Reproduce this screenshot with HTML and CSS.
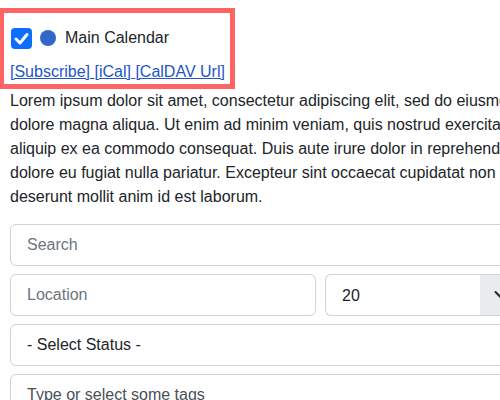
FILE: index.html
```html
<!DOCTYPE html>
<html>
<head>
<meta charset="utf-8">
<link rel="stylesheet" href="styles.css">
</head>
<body>
<div class="page">
  <div class="cal-box">
    <div class="cal-row">
      <span class="check"><svg width="21" height="21" viewBox="0 0 21 21"><rect width="21" height="21" rx="4" fill="#0d6efd"/><path d="M5 11 L9 15 L16 6.5" fill="none" stroke="#fff" stroke-width="3" stroke-linecap="round" stroke-linejoin="round"/></svg></span>
      <span class="dot"></span>
      <span class="cal-name">Main Calendar</span>
    </div>
    <div class="cal-links"><a href="#">[Subscribe] </a><a href="#">[iCal] </a><a href="#">[CalDAV Url]</a></div>
  </div>
  <div class="content">
    <p class="lorem">Lorem ipsum dolor sit amet, consectetur adipiscing elit, sed do eiusmod tempor incididunt ut labore et<br>dolore magna aliqua. Ut enim ad minim veniam, quis nostrud exercitation ullamco laboris nisi ut<br>aliquip ex ea commodo consequat. Duis aute irure dolor in reprehenderit in voluptate velit esse cillum<br>dolore eu fugiat nulla pariatur. Excepteur sint occaecat cupidatat non proident, sunt in culpa qui officia<br>deserunt mollit anim id est laborum.</p>
    <form class="filters">
      <input class="field" type="text" placeholder="Search">
      <div class="filter-row">
        <input class="field location" type="text" placeholder="Location">
        <div class="limit-group">
          <select class="limit"><option>20</option></select>
          <span class="addon"><svg width="14" height="10" viewBox="0 0 14 10"><path d="M1.5 2 L7 7.5 L12.5 2" fill="none" stroke="#212529" stroke-width="2" stroke-linecap="round" stroke-linejoin="round"/></svg></span>
        </div>
      </div>
      <select class="field status"><option>- Select Status -</option></select>
      <div class="field tags">Type or select some tags</div>
    </form>
  </div>
</div>
</body>
</html>
```
FILE: styles.css
```css
html, body {
  overflow: hidden;
}
body {
  margin: 0;
  padding-top: 8px;
  font-family: "Liberation Sans", Arial, sans-serif;
  font-size: 16px;
  line-height: 24px;
  color: #212529;
  background: #fff;
}
.page {
  width: 760px;
}
.cal-box {
  display: inline-block;
  border: 5px solid #ff6464;
  border-left-width: 4px;
  padding: 14px 5px 0 6px;
}
.cal-row {
  display: flex;
  align-items: center;
  height: 22px;
}
.check {
  display: block;
  width: 21px;
  height: 21px;
  margin-left: 1px;
}
.check svg {
  display: block;
}
.dot {
  width: 16px;
  height: 16px;
  border-radius: 50%;
  background: #3366cc;
  margin-left: 8px;
}
.cal-name {
  margin-left: 9px;
}
.cal-links {
  margin-top: 11px;
  white-space: nowrap;
}
.cal-links a {
  color: #2356c6;
  text-decoration: underline;
}
.content {
  padding-left: 10px;
}
.lorem {
  margin: 0 0 15px;
  white-space: nowrap;
}
.filters {
  display: flex;
  flex-direction: column;
  gap: 8px;
}
.field {
  box-sizing: border-box;
  height: 42px;
  padding: 8px 16px;
  border: 1px solid #ced4da;
  border-radius: 6px;
  font-family: inherit;
  font-size: 16px;
  line-height: 24px;
  color: #212529;
  background: #fff;
  width: 100%;
  outline: none;
}
.field::placeholder {
  color: #6c757d;
}
select.field {
  appearance: none;
  -webkit-appearance: none;
}
.filter-row {
  display: flex;
  gap: 9px;
}
.location {
  width: 306px;
  flex: none;
}
.limit-group {
  flex: 1;
  display: flex;
  height: 42px;
}
.limit {
  appearance: none;
  -webkit-appearance: none;
  box-sizing: border-box;
  width: 155px;
  height: 42px;
  padding: 8px 16px;
  border: 1px solid #ced4da;
  border-right: none;
  border-radius: 6px 0 0 6px;
  font-family: inherit;
  font-size: 16px;
  color: #212529;
  background: #fff;
  outline: none;
}
.addon {
  flex: 1;
  display: flex;
  align-items: center;
  padding-left: 14px;
  background: #e9ecef;
  border: 1px solid #ced4da;
  border-left: none;
  border-radius: 0 6px 6px 0;
}
.addon svg {
  display: block;
}
.tags {
  color: #495057;
}
```
